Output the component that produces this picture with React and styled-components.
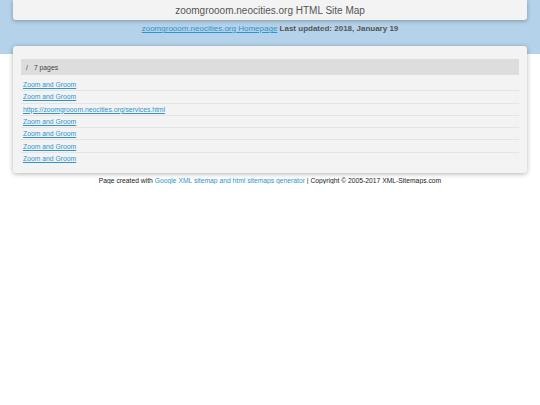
import styled, { createGlobalStyle } from "styled-components";

const GlobalStyle = createGlobalStyle`
  html, body {
    margin: 0;
    padding: 0;
    background: #fff;
    font-family: "Liberation Sans", Arial, sans-serif;
  }
`;

const Band = styled.div`
  background: #b4d2e9;
  height: 54px;
  padding: 0 13px;
`;

const TopBar = styled.div`
  background: #f3f3f3;
  height: 20px;
  display: flex;
  align-items: center;
  justify-content: center;
  box-shadow: 0 1px 4px rgba(0, 0, 0, 0.3);
  border-radius: 0 0 3px 3px;
`;

const Title = styled.h1`
  margin: 0;
  font-size: 10px;
  font-weight: normal;
  color: #555;
`;

const SubLine = styled.div`
  text-align: center;
  font-size: 8px;
  margin-top: 4px;
  color: #555;
  font-weight: bold;

  a {
    color: #2f93cc;
    font-weight: normal;
  }
`;

const Card = styled.div`
  margin: -8px 13px 0;
  background: #f3f3f3;
  border-radius: 3px;
  box-shadow: 0 1px 5px rgba(0, 0, 0, 0.3);
  padding: 13px 8px 9px;
  position: relative;
`;

const HeadRow = styled.div`
  background: #dddddd;
  height: 16px;
  display: flex;
  align-items: center;
  padding-left: 5px;
  font-size: 6.8px;
  color: #444;
  margin-bottom: 4px;

  span {
    margin-right: 6px;
  }
`;

const Row = styled.div`
  height: 11.3px;
  display: flex;
  align-items: center;
  padding-left: 2px;
  font-size: 6.8px;
  border-top: ${(p) => (p.$first ? "none" : "1px solid #e4e4e4")};

  a {
    color: #2f93cc;
  }
`;

const Footer = styled.div`
  text-align: center;
  font-size: 6.75px;
  color: #222;
  margin-top: 4px;

  a {
    color: #2f93cc;
    text-decoration: underline;
  }
`;

const links = [
  "Zoom and Groom",
  "Zoom and Groom",
  "https://zoomgrooom.neocities.org/services.html",
  "Zoom and Groom",
  "Zoom and Groom",
  "Zoom and Groom",
  "Zoom and Groom",
];

export default function App() {
  return (
    <>
      <GlobalStyle />
      <Band>
        <TopBar>
          <Title>zoomgrooom.neocities.org HTML Site Map</Title>
        </TopBar>
        <SubLine>
          <a href="#">zoomgrooom.neocities.org Homepage</a> Last updated: 2018, January 19
        </SubLine>
      </Band>
      <Card>
        <HeadRow>
          <span>/</span>7 pages
        </HeadRow>
        {links.map((l, i) => (
          <Row key={i} $first={i === 0}>
            <a href="#">{l}</a>
          </Row>
        ))}
      </Card>
      <Footer>
        Page created with <a href="#">Google XML sitemap and html sitemaps generator</a> | Copyright © 2005-2017 XML-Sitemaps.com
      </Footer>
    </>
  );
}
